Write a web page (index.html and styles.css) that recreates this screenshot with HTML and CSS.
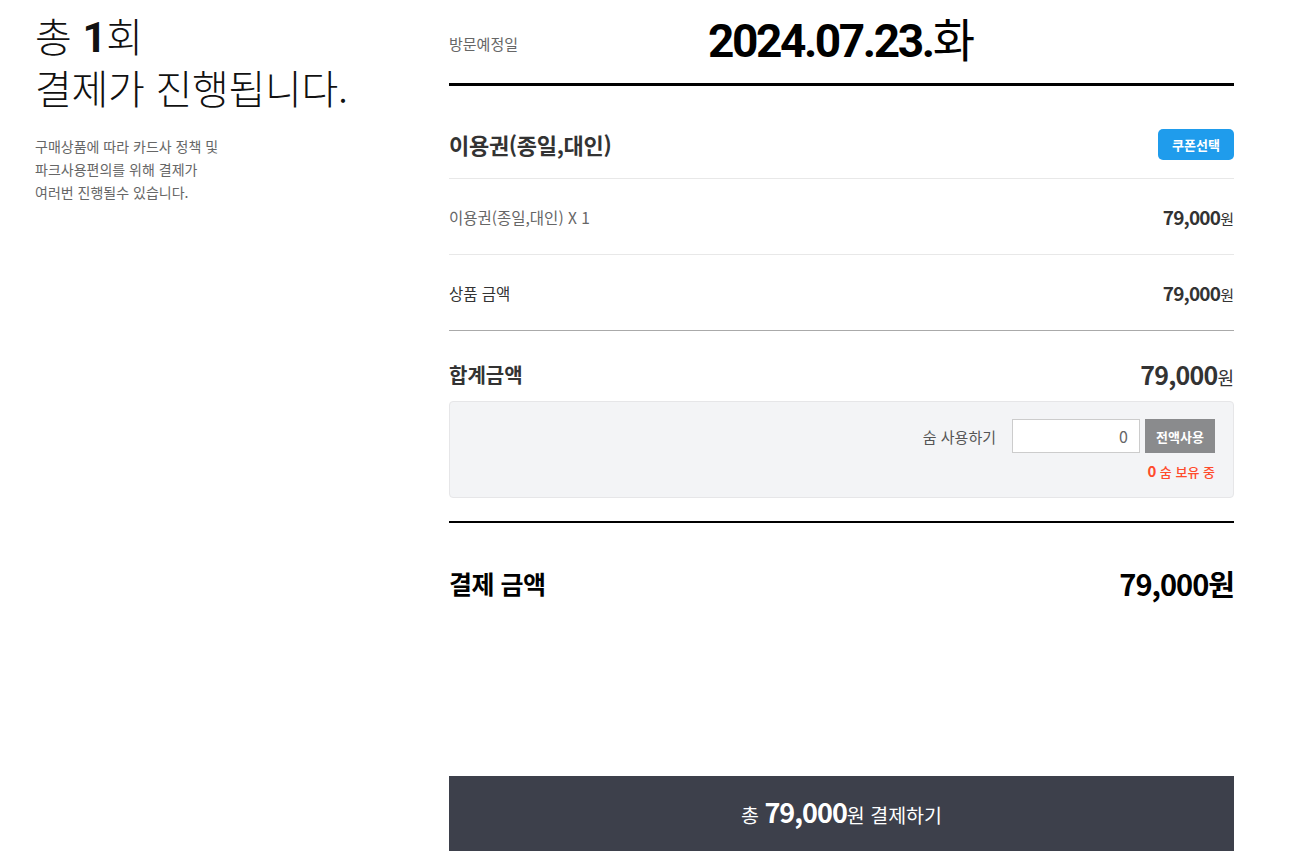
FILE: index.html
```html
<!DOCTYPE html>
<html lang="ko">
<head>
<meta charset="utf-8">
<link rel="stylesheet" href="styles.css">
</head>
<body>
<div class="page">
  <aside class="side">
    <h1 class="side-title"><span class="line">총 <b>1</b>회</span><span class="line">결제가 진행됩니다.</span></h1>
    <p class="side-desc">구매상품에 따라 카드사 정책 및<br>파크사용편의를 위해 결제가<br>여러번 진행될수 있습니다.</p>
  </aside>
  <main class="main">
    <div class="visit">
      <span class="visit-label">방문예정일</span>
      <span class="visit-date">2024.07.23.<span class="visit-day">화</span></span>
      <span></span>
    </div>
    <div class="product-head">
      <h2 class="product-name">이용권(종일,대인)</h2>
      <button class="coupon-btn">쿠폰선택</button>
    </div>
    <div class="row row-light">
      <span class="row-label muted">이용권(종일,대인) X 1</span>
      <span class="price"><b>79,000</b>원</span>
    </div>
    <div class="row row-gray">
      <span class="row-label">상품 금액</span>
      <span class="price"><b>79,000</b>원</span>
    </div>
    <div class="sum">
      <span class="sum-label">합계금액</span>
      <span class="sum-price"><b>79,000</b>원</span>
    </div>
    <div class="points">
      <div class="points-line">
        <span class="points-label">숨 사용하기</span>
        <input class="points-input" type="text" value="0">
        <button class="points-all">전액사용</button>
      </div>
      <div class="points-own"><b>0</b> 숨 보유 중</div>
    </div>
    <div class="total">
      <span class="total-label">결제 금액</span>
      <span class="total-price">79,000원</span>
    </div>
    <button class="pay-btn">총 <b>79,000</b>원 결제하기</button>
  </main>
</div>
</body>
</html>
```
FILE: styles.css
```css
* { box-sizing: border-box; }
html, body { margin: 0; padding: 0; background: #fff; }
body {
  font-family: "Noto Sans CJK KR", "Noto Sans", sans-serif;
  color: #333;
}
.page {
  display: flex;
  width: 1293px;
  height: 866px;
  overflow: hidden;
}
.side {
  width: 449px;
  padding-left: 35px;
  padding-top: 9px;
  flex-shrink: 0;
}
.side-title {
  margin: 0;
  font-size: 40px;
  line-height: 52px;
  font-weight: 300;
  color: #111;
  letter-spacing: -0.3px;
}
.side-title .line {
  display: block;
  height: 52px;
}
.side-title b {
  font-family: "Roboto", "Noto Sans CJK KR", sans-serif;
  font-weight: 700;
  font-size: 42px;
}
.side-desc {
  margin: 22px 0 0;
  font-size: 14px;
  line-height: 23px;
  color: #666;
}
.main {
  width: 785px;
  display: flex;
  flex-direction: column;
}
.visit {
  display: grid;
  grid-template-columns: 1fr auto 1fr;
  align-items: center;
  height: 86px;
  border-bottom: 3px solid #000;
  padding-bottom: 10px;
}
.visit-label {
  font-size: 15px;
  color: #666;
  padding-top: 14px;
}
.visit-date {
  font-family: "Roboto", "Noto Sans CJK KR", sans-serif;
  font-size: 46px;
  font-weight: 700;
  color: #000;
  letter-spacing: -2.4px;
}
.visit-day {
  font-family: "Noto Sans CJK KR", sans-serif;
  font-weight: 400;
  letter-spacing: 0;
}
.product-head {
  display: flex;
  justify-content: space-between;
  align-items: center;
  height: 93px;
  padding-top: 24px;
  border-bottom: 1px solid #e8e8e8;
}
.product-name {
  margin: 0;
  font-size: 22px;
  font-weight: 700;
  color: #333;
  letter-spacing: -0.3px;
}
.coupon-btn {
  font-family: inherit;
  background: #1f9cec;
  color: #fff;
  border: 0;
  border-radius: 5px;
  width: 76px;
  height: 31px;
  font-size: 13px;
  font-weight: 700;
  padding: 0;
}
.row {
  display: flex;
  justify-content: space-between;
  align-items: center;
  height: 76px;
}
.row-light { border-bottom: 1px solid #e8e8e8; }
.row-gray { border-bottom: 1px solid #aaa; }
.row-label { font-size: 15.5px; color: #333; }
.row-label.muted { color: #666; }
.price { font-size: 15px; color: #333; }
.price b { font-size: 19px; font-weight: 700; letter-spacing: -0.8px; }
.sum {
  display: flex;
  justify-content: space-between;
  align-items: center;
  height: 70px;
  padding-top: 22px;
  padding-bottom: 6px;
}
.sum-label { font-size: 20px; font-weight: 700; color: #333; }
.sum-price { font-size: 18px; color: #333; }
.sum-price b { font-size: 25px; font-weight: 700; letter-spacing: -0.8px; }
.points {
  background: #f3f4f6;
  border: 1px solid #e6e6e8;
  border-radius: 4px;
  padding: 17px 18px 14px;
  display: flex;
  flex-direction: column;
  align-items: flex-end;
  height: 97px;
}
.points-line {
  display: flex;
  align-items: center;
}
.points-label {
  font-size: 15px;
  color: #555;
  margin-right: 16px;
}
.points-input {
  width: 128px;
  height: 34px;
  border: 1px solid #ccc;
  background: #fff;
  text-align: right;
  padding: 0 11px;
  font-family: inherit;
  font-size: 16px;
  color: #666;
  margin: 0;
  outline: none;
}
.points-all {
  width: 70px;
  height: 34px;
  margin-left: 5px;
  border: 0;
  background: #8a8b8d;
  color: #fff;
  font-family: inherit;
  font-size: 13px;
  font-weight: 700;
  padding: 0;
}
.points-own {
  margin-top: 7px;
  font-size: 13px;
  color: #ff4b2b;
  font-weight: 500;
}
.points-own b { font-size: 15px; font-weight: 700; }
.total {
  margin-top: 23px;
  border-top: 2px solid #000;
  display: flex;
  justify-content: space-between;
  align-items: center;
  height: 126px;
  padding-bottom: 4px;
}
.total-label { font-size: 25px; font-weight: 700; color: #000; letter-spacing: -0.5px; }
.total-price { font-size: 29px; font-weight: 700; color: #000; letter-spacing: -1px; }
.pay-btn {
  margin-top: 129px;
  height: 75px;
  width: 100%;
  border: 0;
  background: #3d404b;
  color: #fff;
  font-family: inherit;
  font-size: 19.5px;
  padding: 0 0 4px;
}
.pay-btn b { font-size: 27px; font-weight: 700; letter-spacing: -1px; }
```
